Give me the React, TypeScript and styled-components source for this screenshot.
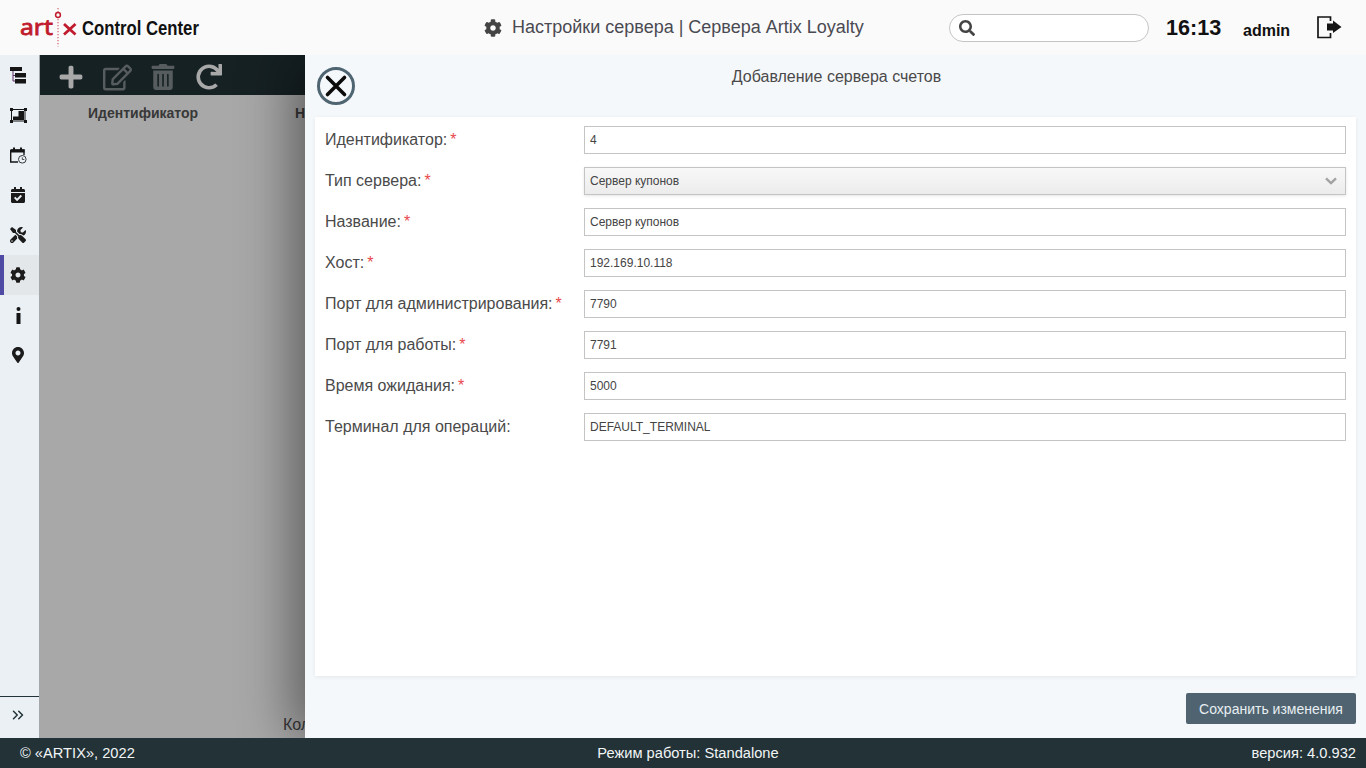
import React from 'react';
import styled, { createGlobalStyle } from 'styled-components';
import {
  FaCalendarCheck,
  FaCog,
  FaMapMarkerAlt,
  FaPlus,
  FaRedo,
  FaRegEdit,
  FaSearch,
  FaTools,
  FaTrashAlt,
} from 'react-icons/fa';
import { ChevronsRight } from 'lucide-react';

const GlobalStyle = createGlobalStyle`
  html, body {
    margin: 0;
    height: 100%;
    overflow: hidden;
  }
  body {
    font-family: "Liberation Sans", Arial, sans-serif;
    color: #444;
  }
  #root {
    height: 100%;
  }
  * {
    box-sizing: border-box;
  }
`;

const Page = styled.div`
  display: flex;
  flex-direction: column;
  width: 1366px;
  height: 768px;
`;

const Header = styled.header`
  position: relative;
  z-index: 2;
  display: flex;
  align-items: center;
  height: 55px;
  flex: none;
  background: #fafafa;
`;

const Brand = styled.div`
  display: flex;
  align-items: center;
  width: 470px;
  padding-left: 20px;
  flex: none;
`;

const BrandName = styled.span`
  display: inline-block;
  margin: 2px 0 0 5px;
  font-family: "Liberation Sans", sans-serif;
  font-size: 20px;
  font-weight: 700;
  color: #111;
  transform: scaleX(0.835);
  transform-origin: left center;
`;

const PageTitle = styled.div`
  display: flex;
  align-items: center;
  width: 479px;
  padding-left: 14px;
  flex: none;
  font-size: 18px;
  color: #4a4a52;
  svg {
    margin-right: 10px;
    font-size: 18px;
    color: #444;
  }
`;

const SearchBox = styled.div`
  display: flex;
  align-items: center;
  width: 200px;
  height: 28px;
  padding-left: 9px;
  flex: none;
  background: #fff;
  border: 1px solid #c4c4c4;
  border-radius: 14px;
  color: #444;
  font-size: 16px;
`;

const Clock = styled.div`
  margin-left: 17px;
  width: 77px;
  flex: none;
  font-size: 21.6px;
  font-weight: 700;
  color: #111;
`;

const UserName = styled.div`
  width: 74px;
  margin-top: 6px;
  flex: none;
  font-size: 16px;
  font-weight: 700;
  color: #111;
`;

const Body = styled.div`
  position: relative;
  display: flex;
  flex: 1;
  min-height: 0;
`;

const Sidebar = styled.nav`
  display: flex;
  flex-direction: column;
  width: 40px;
  flex: none;
  background: #ebf0f4;
  border-right: 1px solid #a5a8aa;
`;

const NavItem = styled.div<{ $active?: boolean }>`
  display: flex;
  align-items: center;
  height: 40px;
  padding-left: 10px;
  font-size: 16px;
  color: #1b1b1b;
  background: ${(p) => (p.$active ? '#e4e7ea' : 'transparent')};
  box-shadow: ${(p) => (p.$active ? 'inset 4px 0 0 #4f4aa3' : 'none')};
`;

const SidebarFoot = styled.div`
  display: flex;
  align-items: center;
  height: 42px;
  margin-top: auto;
  padding: 0 0 5px 9px;
  border-top: 1px solid #22343a;
  color: #22343a;
`;

const Main = styled.main`
  position: relative;
  display: flex;
  flex-direction: column;
  flex: 1;
  background: #fff;
`;

const Toolbar = styled.div`
  display: flex;
  align-items: center;
  height: 40px;
  padding: 4px 0 0 8px;
  flex: none;
  background: #223237;
`;

const ToolIcon = styled.span<{ $muted?: boolean; $size?: number }>`
  display: flex;
  justify-content: center;
  width: 46px;
  font-size: ${(p) => p.$size ?? 26}px;
  color: ${(p) => (p.$muted ? '#858c8f' : '#fff')};
`;

const TableHead = styled.div`
  display: flex;
  height: 36px;
  align-items: center;
  padding-left: 48px;
  flex: none;
  font-size: 14px;
  font-weight: 700;
  color: #555;
`;

const HeadCell = styled.div`
  width: 207px;
`;

const Pager = styled.div`
  margin-top: auto;
  padding: 0 0 4px 243px;
  font-size: 16px;
  color: #555;
`;

const Dim = styled.div`
  position: absolute;
  inset: 0;
  background: rgba(0, 0, 0, 0.34);
`;

const Drawer = styled.aside`
  position: absolute;
  top: 0;
  right: 0;
  bottom: 0;
  display: flex;
  flex-direction: column;
  width: 1061px;
  padding: 0 10px;
  background: #f5f8fb;
  box-shadow: -12px 0 50px rgba(0, 0, 0, 0.45);
`;

const DrawerHead = styled.div`
  position: relative;
  height: 62px;
  padding: 13px 0 0 2px;
  flex: none;
  text-align: center;
  font-size: 16px;
  color: #4a4a4a;
`;

const CloseButton = styled.button`
  position: absolute;
  top: 12px;
  left: 2px;
  display: flex;
  align-items: center;
  justify-content: center;
  width: 38px;
  height: 38px;
  padding: 0;
  background: transparent;
  border: 3px solid #4f6672;
  border-radius: 50%;
`;

const FormCard = styled.form`
  display: flex;
  flex-direction: column;
  gap: 13px;
  height: 559px;
  padding: 9px 10px 0;
  flex: none;
  background: #fff;
  box-shadow: 0 1px 4px rgba(0, 0, 0, 0.07);
`;

const Row = styled.div`
  display: flex;
  align-items: center;
  height: 28px;
`;

const Label = styled.label`
  width: 259px;
  flex: none;
  font-size: 16px;
  color: #4a4a4a;
`;

const Required = styled.span`
  margin-left: 3px;
  color: #e8484a;
`;

const Input = styled.input`
  flex: 1;
  height: 28px;
  padding: 0 5px;
  font-family: inherit;
  font-size: 12px;
  color: #444;
  background: #fff;
  border: 1px solid #c4c4c4;
  border-radius: 0;
  outline: none;
`;

const SelectBox = styled.div`
  display: flex;
  align-items: center;
  justify-content: space-between;
  flex: 1;
  height: 28px;
  padding: 0 8px 0 5px;
  font-size: 12px;
  color: #444;
  background: linear-gradient(#f8f8f8, #ececec);
  border: 1px solid #c4c4c4;
  box-shadow: 0 1px 3px rgba(0, 0, 0, 0.1);
`;

const DrawerFoot = styled.div`
  display: flex;
  justify-content: flex-end;
  padding-top: 17px;
`;

const SaveButton = styled.button`
  width: 170px;
  height: 31px;
  padding: 0;
  font-family: inherit;
  font-size: 14px;
  color: #e8eef2;
  background: #4f6470;
  border: none;
  border-radius: 2px;
`;

const Footer = styled.footer`
  position: relative;
  z-index: 2;
  display: grid;
  grid-template-columns: 1fr auto 1fr;
  align-items: center;
  height: 30px;
  padding: 0 10px 0 20px;
  flex: none;
  font-size: 14.67px;
  color: #f2f5f6;
  background: #223237;
`;

const FooterEnd = styled.div`
  text-align: right;
`;

const LogoMark = () => (
  <svg width="57" height="46" viewBox="0 0 57 46" aria-hidden="true">
    <text
      x="0"
      y="29.5"
      fontFamily="Noto Sans, sans-serif"
      fontSize="22"
      fill="#c11b2e"
      stroke="#c11b2e"
      strokeWidth="0.8"
      textLength="33"
      lengthAdjust="spacingAndGlyphs"
    >
      art
    </text>
    <path d="M44 19 L55.500 29.500 M55.500 19 L44 29.500" stroke="#c11b2e" strokeWidth="2.800" fill="none" />
    <circle cx="38" cy="10" r="2.400" fill="none" stroke="#c11b2e" strokeWidth="1.500" />
    <path d="M38 3 V7 M38 14 V41.500" stroke="#c11b2e" strokeWidth="1.600" strokeDasharray="1.300 1.700" opacity="0.5" />
  </svg>
);

const TreeIcon = () => (
  <svg width="17" height="17" viewBox="0 0 17 17" aria-hidden="true">
    <path d="M3 3 V14 H6 M3 8.500 H6" stroke="#5a2f66" strokeWidth="1" fill="none" />
    <rect x="0" y="0" width="12" height="4" fill="#151515" />
    <rect x="5" y="6" width="11" height="4.500" fill="#151515" />
    <rect x="5" y="12" width="11" height="4.500" fill="#151515" />
  </svg>
);

const FrameIcon = () => (
  <svg width="17" height="15" viewBox="0 0 17 15" aria-hidden="true">
    <rect x="1.500" y="1.500" width="13.500" height="11.500" fill="none" stroke="#151515" strokeWidth="1" />
    <rect x="0" y="0" width="3" height="3" fill="#151515" />
    <rect x="14" y="0" width="3" height="3" fill="#151515" />
    <rect x="0" y="12" width="3" height="3" fill="#151515" />
    <rect x="14" y="12" width="3" height="3" fill="#151515" />
    <path d="M3 8.500 H8.500 V3 H14 V12 H3 Z" fill="#151515" />
  </svg>
);

const CalendarClockIcon = () => (
  <svg width="17" height="17" viewBox="0 0 17 17" aria-hidden="true">
    <path d="M0.700 3 H14 V8 M0.700 3 V15 H8" fill="none" stroke="#151515" strokeWidth="1.400" />
    <rect x="0.500" y="2.500" width="14" height="3" fill="#151515" />
    <rect x="3" y="0.500" width="2" height="3.500" fill="#151515" />
    <rect x="10" y="0.500" width="2" height="3.500" fill="#151515" />
    <circle cx="12.300" cy="12.300" r="3.800" fill="#ebf0f4" stroke="#33393d" strokeWidth="1" />
    <path d="M12.300 10.300 V12.500 H14.300" fill="none" stroke="#33393d" strokeWidth="0.900" />
  </svg>
);

const InfoIcon = () => (
  <svg width="12" height="17" viewBox="0 0 12 17" aria-hidden="true">
    <circle cx="8.500" cy="2" r="2" fill="#151515" />
    <rect x="6.500" y="6" width="4" height="11" fill="#151515" />
  </svg>
);

const LogoutIcon = () => (
  <svg width="25" height="23" viewBox="0 0 25 23" aria-hidden="true">
    <path d="M13.500 5 V1 H1 V21.500 H13.500 V17" fill="none" stroke="#151515" strokeWidth="1.700" />
    <path d="M10 7.500 H16 V4.500 L24.500 11 L16 17 V14.500 H10 Z" fill="#151515" />
  </svg>
);

const CloseCross = () => (
  <svg width="24" height="24" viewBox="0 0 24 24" aria-hidden="true">
    <path d="M3.500 3.500 L20.500 20.500 M20.500 3.500 L3.500 20.500" stroke="#0b0b0b" strokeWidth="3.600" strokeLinecap="round" />
  </svg>
);

const SelectArrow = () => (
  <svg width="12" height="8" viewBox="0 0 12 8" aria-hidden="true">
    <path d="M1 1.300 L6 6 L11 1.300" fill="none" stroke="#a2a2a2" strokeWidth="2.400" />
  </svg>
);

const fields = [
  { label: 'Идентификатор:', value: '4', required: true },
  { label: 'Тип сервера:', value: 'Сервер купонов', required: true, select: true },
  { label: 'Название:', value: 'Сервер купонов', required: true },
  { label: 'Хост:', value: '192.169.10.118', required: true },
  { label: 'Порт для администрирования:', value: '7790', required: true },
  { label: 'Порт для работы:', value: '7791', required: true },
  { label: 'Время ожидания:', value: '5000', required: true },
  { label: 'Терминал для операций:', value: 'DEFAULT_TERMINAL' },
];

const App: React.FC = () => {
  return (
    <Page>
      <GlobalStyle />
      <Header>
        <Brand>
          <LogoMark />
          <BrandName>Control Center</BrandName>
        </Brand>
        <PageTitle>
          <FaCog />
          Настройки сервера | Сервера Artix Loyalty
        </PageTitle>
        <SearchBox>
          <FaSearch />
        </SearchBox>
        <Clock>16:13</Clock>
        <UserName>admin</UserName>
        <LogoutIcon />
      </Header>
      <Body>
        <Sidebar>
          <NavItem><TreeIcon /></NavItem>
          <NavItem><FrameIcon /></NavItem>
          <NavItem><CalendarClockIcon /></NavItem>
          <NavItem><FaCalendarCheck /></NavItem>
          <NavItem><FaTools /></NavItem>
          <NavItem $active><FaCog /></NavItem>
          <NavItem><InfoIcon /></NavItem>
          <NavItem><FaMapMarkerAlt /></NavItem>
          <SidebarFoot><ChevronsRight size={18} strokeWidth={2} /></SidebarFoot>
        </Sidebar>
        <Main>
          <Toolbar>
            <ToolIcon><FaPlus /></ToolIcon>
            <ToolIcon $muted $size={29}><FaRegEdit /></ToolIcon>
            <ToolIcon $muted><FaTrashAlt /></ToolIcon>
            <ToolIcon><FaRedo /></ToolIcon>
          </Toolbar>
          <TableHead>
            <HeadCell>Идентификатор</HeadCell>
            <HeadCell>Название</HeadCell>
          </TableHead>
          <Pager>Количество</Pager>
          <Dim />
        </Main>
        <Drawer>
          <DrawerHead>
            <CloseButton type="button"><CloseCross /></CloseButton>
            Добавление сервера счетов
          </DrawerHead>
          <FormCard>
            {fields.map((f) => (
              <Row key={f.label}>
                <Label>
                  {f.label}
                  {f.required && <Required>*</Required>}
                </Label>
                {f.select ? (
                  <SelectBox>
                    {f.value}
                    <SelectArrow />
                  </SelectBox>
                ) : (
                  <Input defaultValue={f.value} />
                )}
              </Row>
            ))}
          </FormCard>
          <DrawerFoot>
            <SaveButton type="button">Сохранить изменения</SaveButton>
          </DrawerFoot>
        </Drawer>
      </Body>
      <Footer>
        <div>© «ARTIX», 2022</div>
        <div>Режим работы: Standalone</div>
        <FooterEnd>версия: 4.0.932</FooterEnd>
      </Footer>
    </Page>
  );
};

export default App;
